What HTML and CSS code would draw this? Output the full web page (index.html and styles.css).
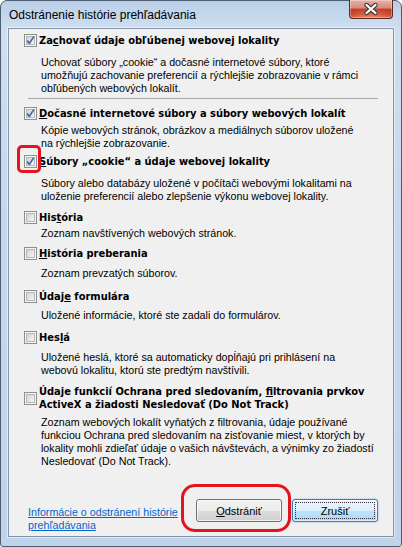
FILE: index.html
```html
<!DOCTYPE html>
<html lang="sk">
<head>
<meta charset="utf-8">
<title>Odstránenie histórie prehľadávania</title>
<link rel="stylesheet" href="styles.css">
</head>
<body>
<div class="window">
  <div class="titlebar">
    <span class="title">Odstránenie histórie prehľadávania</span>
    <div class="close">
      <svg width="42" height="18" viewBox="0 0 42 18">
        <path d="M16.5 5 L25.5 13 M25.5 5 L16.5 13" stroke="#3b3b3b" stroke-width="4.4" stroke-linecap="round" fill="none"/>
        <path d="M16.5 5 L25.5 13 M25.5 5 L16.5 13" stroke="#ffffff" stroke-width="2.3" stroke-linecap="round" fill="none"/>
      </svg>
    </div>
  </div>
  <div class="panel">
    <div class="opt o1">
      <div class="row">
        <span class="cb"><svg width="13" height="13" viewBox="0 0 13 13"><use href="#cbox"/><use href="#tick"/></svg></span>
        <span class="label">Za<u>c</u>hovať údaje obľúbenej webovej lokality</span>
      </div>
      <div class="desc d1">Uchovať súbory „cookie“ a dočasné internetové súbory, ktoré<br>umožňujú zachovanie preferencií a rýchlejšie zobrazovanie v rámci<br>obľúbených webových lokalít.</div>
    </div>
    <div class="sep"></div>
    <div class="opt o2">
      <div class="row">
        <span class="cb"><svg width="13" height="13" viewBox="0 0 13 13"><use href="#cbox"/><use href="#tick"/></svg></span>
        <span class="label"><u>D</u>očasné internetové súbory a súbory webových lokalít</span>
      </div>
      <div class="desc d2">Kópie webových stránok, obrázkov a mediálnych súborov uložené<br>na rýchlejšie zobrazovanie.</div>
    </div>
    <div class="opt o3">
      <div class="row">
        <span class="cb marked"><svg width="13" height="13" viewBox="0 0 13 13"><use href="#cbox"/><use href="#tick"/></svg></span>
        <span class="label"><u>S</u>úbory „cookie“ a údaje webovej lokality</span>
      </div>
      <div class="desc d3">Súbory alebo databázy uložené v počítači webovými lokalitami na<br>uloženie preferencií alebo zlepšenie výkonu webovej lokality.</div>
    </div>
    <div class="opt o4">
      <div class="row">
        <span class="cb"><svg width="13" height="13" viewBox="0 0 13 13"><use href="#cbox"/></svg></span>
        <span class="label">His<u>t</u>ória</span>
      </div>
      <div class="desc d4">Zoznam navštívených webových stránok.</div>
    </div>
    <div class="opt o5">
      <div class="row">
        <span class="cb"><svg width="13" height="13" viewBox="0 0 13 13"><use href="#cbox"/></svg></span>
        <span class="label"><u>H</u>istória preberania</span>
      </div>
      <div class="desc d5">Zoznam prevzatých súborov.</div>
    </div>
    <div class="opt o6">
      <div class="row">
        <span class="cb"><svg width="13" height="13" viewBox="0 0 13 13"><use href="#cbox"/></svg></span>
        <span class="label">Údaj<u>e</u> formulára</span>
      </div>
      <div class="desc d6">Uložené informácie, ktoré ste zadali do formulárov.</div>
    </div>
    <div class="opt o7">
      <div class="row">
        <span class="cb"><svg width="13" height="13" viewBox="0 0 13 13"><use href="#cbox"/></svg></span>
        <span class="label">Hes<u>l</u>á</span>
      </div>
      <div class="desc d7">Uložené heslá, ktoré sa automaticky dopĺňajú pri prihlásení na<br>webovú lokalitu, ktorú ste predtým navštívili.</div>
    </div>
    <div class="opt o8">
      <div class="row two">
        <span class="cb"><svg width="13" height="13" viewBox="0 0 13 13"><use href="#cbox"/></svg></span>
        <span class="label">Údaje funkcií Ochrana pred sledovaním, <u>f</u>iltrovania prvkov<br>ActiveX a žiadosti Nesledovať (Do Not Track)</span>
      </div>
      <div class="desc d8">Zoznam webových lokalít vyňatých z filtrovania, údaje používané<br>funkciou Ochrana pred sledovaním na zisťovanie miest, v ktorých by<br>lokality mohli zdieľať údaje o vašich návštevách, a výnimky zo žiadostí<br>Nesledovať (Do Not Track).</div>
    </div>
    <div class="footer">
      <a class="link" href="#">Informácie o odstránení histórie<br>prehľadávania</a>
      <div class="buttons">
        <span class="ring"><button class="btn"><u>O</u>dstrániť</button></span>
        <button class="btn default"><span class="focus">Zrušiť</span></button>
      </div>
    </div>
  </div>
</div>
<svg class="defs" width="0" height="0">
  <defs>
    <linearGradient id="cbg" x1="0" y1="0" x2="1" y2="1">
      <stop offset="0" stop-color="#cfd2d6"/>
      <stop offset="1" stop-color="#f7f7f7"/>
    </linearGradient>
    <g id="cbox">
      <rect x="0.5" y="0.5" width="12" height="12" fill="#f6f6f6" stroke="#8e8f8f"/>
      <rect x="2.5" y="2.5" width="8" height="8" fill="url(#cbg)" stroke="#b4b8bd"/>
    </g>
    <g id="tick">
      <path d="M3.2 6.6 L5.4 9.4 L9.8 2.6" fill="none" stroke="#4d63a6" stroke-width="1.7" stroke-linejoin="round"/>
    </g>
  </defs>
</svg>
</body>
</html>
```
FILE: styles.css
```css
html, body {
  margin: 0;
  padding: 0;
  background: #ffffff;
}

.defs {
  position: absolute;
  width: 0;
  height: 0;
}

.window {
  box-sizing: border-box;
  width: 402px;
  height: 547px;
  border: 1px solid #4e5d70;
  border-radius: 7px 7px 3px 3px;
  background: linear-gradient(to bottom, #b9cfe8 0, #cfdff0 28px, #c6d8ed 200px, #bfd3ea 100%);
  display: flex;
  flex-direction: column;
  font-family: "Liberation Sans", Arial, sans-serif;
  color: #000;
}

.titlebar {
  height: 27px;
  display: flex;
  align-items: flex-start;
  padding: 0 8px;
}

.title {
  font-family: "Liberation Sans", Arial, sans-serif;
  font-size: 12px;
  line-height: 16px;
  margin-top: 6px;
  color: #000;
}

.close {
  margin-left: auto;
  margin-top: -1px;
  width: 42px;
  height: 18px;
  border: 1px solid #5c2820;
  border-top: none;
  border-radius: 0 0 4px 4px;
  background:
    radial-gradient(ellipse 60% 55% at 50% 100%, rgba(255,150,110,0.75), rgba(255,150,110,0) 100%),
    linear-gradient(to bottom, #e6b0a4 0, #d88a7b 45%, #c0402c 50%, #c23a24 75%, #cd5a40 100%);
  box-shadow: inset 0 0 0 1px rgba(255,255,255,0.35);
  display: flex;
}

.panel {
  box-sizing: border-box;
  margin: 0 7px;
  height: 509px;
  border: 1px solid #8596ab;
  background: #f0f0f0;
  box-shadow: 0 0 0 1px rgba(255,255,255,0.5);
  display: flex;
  flex-direction: column;
}

.opt {
  padding-left: 15px;
}

.row {
  display: flex;
  align-items: flex-start;
  height: 13px;
}

.row.two {
  height: 26px;
  align-items: center;
}

.cb {
  width: 13px;
  height: 13px;
  flex: none;
  position: relative;
}

.cb svg {
  display: block;
}

.cb.marked::after {
  content: "";
  position: absolute;
  left: -7px;
  top: -10px;
  width: 24px;
  height: 28px;
  box-sizing: border-box;
  border: 3px solid #e3141d;
  border-radius: 5px;
}

.label {
  font-family: "DejaVu Sans Condensed", "DejaVu Sans", sans-serif;
  font-stretch: condensed;
  font-weight: bold;
  font-size: 11px;
  line-height: 13px;
  margin-left: 2px;
  white-space: nowrap;
}

.desc {
  font-size: 10.7px;
  line-height: 13px;
  margin-left: 17px;
  white-space: nowrap;
}

.o1 { margin-top: 5px; }
.d1 { margin-top: 9px; }
.sep {
  margin: 3px 0 0 19px;
  width: 350px;
  height: 1px;
  background: #a8a8a8;
}
.o2 { margin-top: 8px; }
.d2 { margin-top: 4px; }
.o3 { margin-top: 5px; }
.d3 { margin-top: 9px; }
.o4 { margin-top: 8px; }
.d4 { margin-top: 3px; }
.o5 { margin-top: 7px; }
.d5 { margin-top: 7px; }
.o6 { margin-top: 10px; }
.d6 { margin-top: 6px; }
.o7 { margin-top: 9px; }
.d7 { margin-top: 7px; }
.o8 { margin-top: 8px; }
.d8 { margin-top: 5px; }

.footer {
  margin-top: 31px;
  display: flex;
  align-items: flex-start;
  padding: 0 15px 0 19px;
}

.link {
  margin-top: 7px;
  font-size: 10.7px;
  line-height: 13px;
  color: #0066cc;
  text-decoration: underline;
}

.buttons {
  margin-left: auto;
  display: flex;
  gap: 10px;
}

.ring {
  position: relative;
  display: block;
}

.ring::after {
  content: "";
  position: absolute;
  left: -15px;
  top: -15px;
  width: 110px;
  height: 48px;
  box-sizing: border-box;
  border: 3px solid #e3141d;
  border-radius: 14px;
  pointer-events: none;
}

.btn {
  box-sizing: border-box;
  width: 86px;
  height: 23px;
  padding: 0;
  margin: 0;
  border: 1px solid #707070;
  border-radius: 3px;
  background: linear-gradient(to bottom, #f2f2f2 0, #ebebeb 50%, #dddddd 51%, #cfcfcf 100%);
  box-shadow: inset 0 0 0 1px rgba(255,255,255,0.7);
  font-family: "Liberation Sans", Arial, sans-serif;
  font-size: 11px;
  color: #000;
  display: block;
}

.btn.default {
  border-color: #3c7fb1;
  background: linear-gradient(to bottom, #eaf6fd 0, #d9f0fc 50%, #bee6fd 51%, #a7d9f5 100%);
  box-shadow: inset 0 0 0 1px rgba(255,255,255,0.6), 0 0 2px rgba(60,160,230,0.7);
  padding: 2px;
}

.focus {
  display: flex;
  align-items: center;
  justify-content: center;
  height: 100%;
  border: 1px dotted #3a2a3a;
  box-sizing: border-box;
}
```
